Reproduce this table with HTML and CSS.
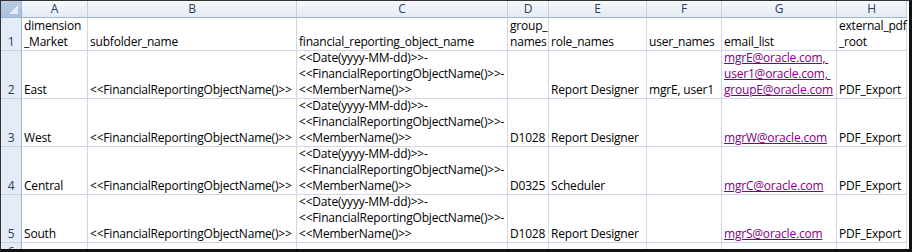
FILE: index.html
```html
<!DOCTYPE html>
<html lang="en">
<head>
    <meta charset="UTF-8">
    <title>Bursting definition sheet</title>
    <link rel="stylesheet" href="styles.css">
</head>
<body>
    <div class="sheet">
        <div class="grid">
            <!-- column headers -->
            <div class="corner"><span class="tri"></span></div>
            <div class="colhead">A</div>
            <div class="colhead">B</div>
            <div class="colhead">C</div>
            <div class="colhead">D</div>
            <div class="colhead">E</div>
            <div class="colhead">F</div>
            <div class="colhead">G</div>
            <div class="colhead">H</div>

            <!-- row 1 -->
            <div class="rowhead">1</div>
            <div class="cell"><span>dimension<br>_Market</span></div>
            <div class="cell"><span>subfolder_name</span></div>
            <div class="cell"><span>financial_reporting_object_name</span></div>
            <div class="cell"><span>group_<br>names</span></div>
            <div class="cell"><span>role_names</span></div>
            <div class="cell"><span>user_names</span></div>
            <div class="cell"><span>email_list</span></div>
            <div class="cell"><span>external_pdf<br>_root</span></div>

            <!-- row 2 -->
            <div class="rowhead">2</div>
            <div class="cell"><span>East</span></div>
            <div class="cell"><span>&lt;&lt;FinancialReportingObjectName()&gt;&gt;</span></div>
            <div class="cell"><span>&lt;&lt;Date(yyyy-MM-dd)&gt;&gt;-<br>&lt;&lt;FinancialReportingObjectName()&gt;&gt;-<br>&lt;&lt;MemberName()&gt;&gt;</span></div>
            <div class="cell"></div>
            <div class="cell"><span>Report Designer</span></div>
            <div class="cell"><span>mgrE, user1</span></div>
            <div class="cell"><span><a class="link">mgrE@oracle.com,&nbsp;</a><br><a class="link">user1@oracle.com,&nbsp;</a><br><a class="link">groupE@oracle.com</a></span></div>
            <div class="cell"><span>PDF_Export</span></div>

            <!-- row 3 -->
            <div class="rowhead">3</div>
            <div class="cell"><span>West</span></div>
            <div class="cell"><span>&lt;&lt;FinancialReportingObjectName()&gt;&gt;</span></div>
            <div class="cell"><span>&lt;&lt;Date(yyyy-MM-dd)&gt;&gt;-<br>&lt;&lt;FinancialReportingObjectName()&gt;&gt;-<br>&lt;&lt;MemberName()&gt;&gt;</span></div>
            <div class="cell"><span>D1028</span></div>
            <div class="cell"><span>Report Designer</span></div>
            <div class="cell"></div>
            <div class="cell"><span><a class="link">mgrW@oracle.com</a></span></div>
            <div class="cell"><span>PDF_Export</span></div>

            <!-- row 4 -->
            <div class="rowhead">4</div>
            <div class="cell"><span>Central</span></div>
            <div class="cell"><span>&lt;&lt;FinancialReportingObjectName()&gt;&gt;</span></div>
            <div class="cell"><span>&lt;&lt;Date(yyyy-MM-dd)&gt;&gt;-<br>&lt;&lt;FinancialReportingObjectName()&gt;&gt;-<br>&lt;&lt;MemberName()&gt;&gt;</span></div>
            <div class="cell"><span>D0325</span></div>
            <div class="cell"><span>Scheduler</span></div>
            <div class="cell"></div>
            <div class="cell"><span><a class="link">mgrC@oracle.com</a></span></div>
            <div class="cell"><span>PDF_Export</span></div>

            <!-- row 5 -->
            <div class="rowhead">5</div>
            <div class="cell"><span>South</span></div>
            <div class="cell"><span>&lt;&lt;FinancialReportingObjectName()&gt;&gt;</span></div>
            <div class="cell"><span>&lt;&lt;Date(yyyy-MM-dd)&gt;&gt;-<br>&lt;&lt;FinancialReportingObjectName()&gt;&gt;-<br>&lt;&lt;MemberName()&gt;&gt;</span></div>
            <div class="cell"><span>D1028</span></div>
            <div class="cell"><span>Report Designer</span></div>
            <div class="cell"></div>
            <div class="cell"><span><a class="link">mgrS@oracle.com</a></span></div>
            <div class="cell"><span>PDF_Export</span></div>

            <!-- row 6, cut off by the window -->
            <div class="rowhead top">6</div>
            <div class="cell"></div>
            <div class="cell"></div>
            <div class="cell"></div>
            <div class="cell"></div>
            <div class="cell"></div>
            <div class="cell"></div>
            <div class="cell"></div>
            <div class="cell"></div>
        </div>
    </div>
</body>
</html>
```

FILE: styles.css
```css
body {
    margin: 0;
    background-color: white;
}
.sheet {
    width: 912px;
    height: 252px;
    box-sizing: border-box;
    border-top: 1px solid #333;
    border-left: 1px solid #333;
    border-right: 3px solid #111;
    border-bottom: 3px solid #111;
    overflow: hidden;
    font-family: "Open Sans", sans-serif;
    font-size: 12px;
    letter-spacing: -0.2px;
    line-height: 16px;
    color: #000;
}
.grid {
    display: grid;
    grid-template-columns: 21px 66px 209px 211px 41px 98px 75px 115px 70px;
    grid-template-rows: 17px 33px 48px 48px 48px 48px 20px;
}
.grid > div {
    box-sizing: border-box;
    white-space: nowrap;
}
.corner {
    position: relative;
    background: linear-gradient(#b9cbe3, #a9c0df);
    border-right: 1px solid #9eb6ce;
    border-bottom: 1px solid #9eb6ce;
}
.tri {
    position: absolute;
    right: 3px;
    bottom: 3px;
    width: 0;
    height: 0;
    border-left: 9px solid transparent;
    border-bottom: 9px solid #e4ecf7;
}
.colhead {
    background: linear-gradient(#f6f9fc, #e4eaf3);
    border-right: 1px solid #c5d2e3;
    border-bottom: 1px solid #9eb6ce;
    text-align: center;
    color: #27415f;
    line-height: 16px;
}
.rowhead {
    background: #e4ecf7;
    border-right: 1px solid #9eb6ce;
    border-bottom: 1px solid #c5d2e3;
    color: #27415f;
    text-align: center;
    display: flex;
    align-items: flex-end;
    justify-content: center;
    overflow: hidden;
}
.rowhead.top {
    align-items: flex-start;
    padding-top: 1px;
}
.cell {
    border-right: 1px solid #d0d7e5;
    border-bottom: 1px solid #d0d7e5;
    padding: 0 0 0 2px;
    display: flex;
    align-items: flex-end;
}
.link {
    color: #800080;
    text-decoration: underline;
}
```
